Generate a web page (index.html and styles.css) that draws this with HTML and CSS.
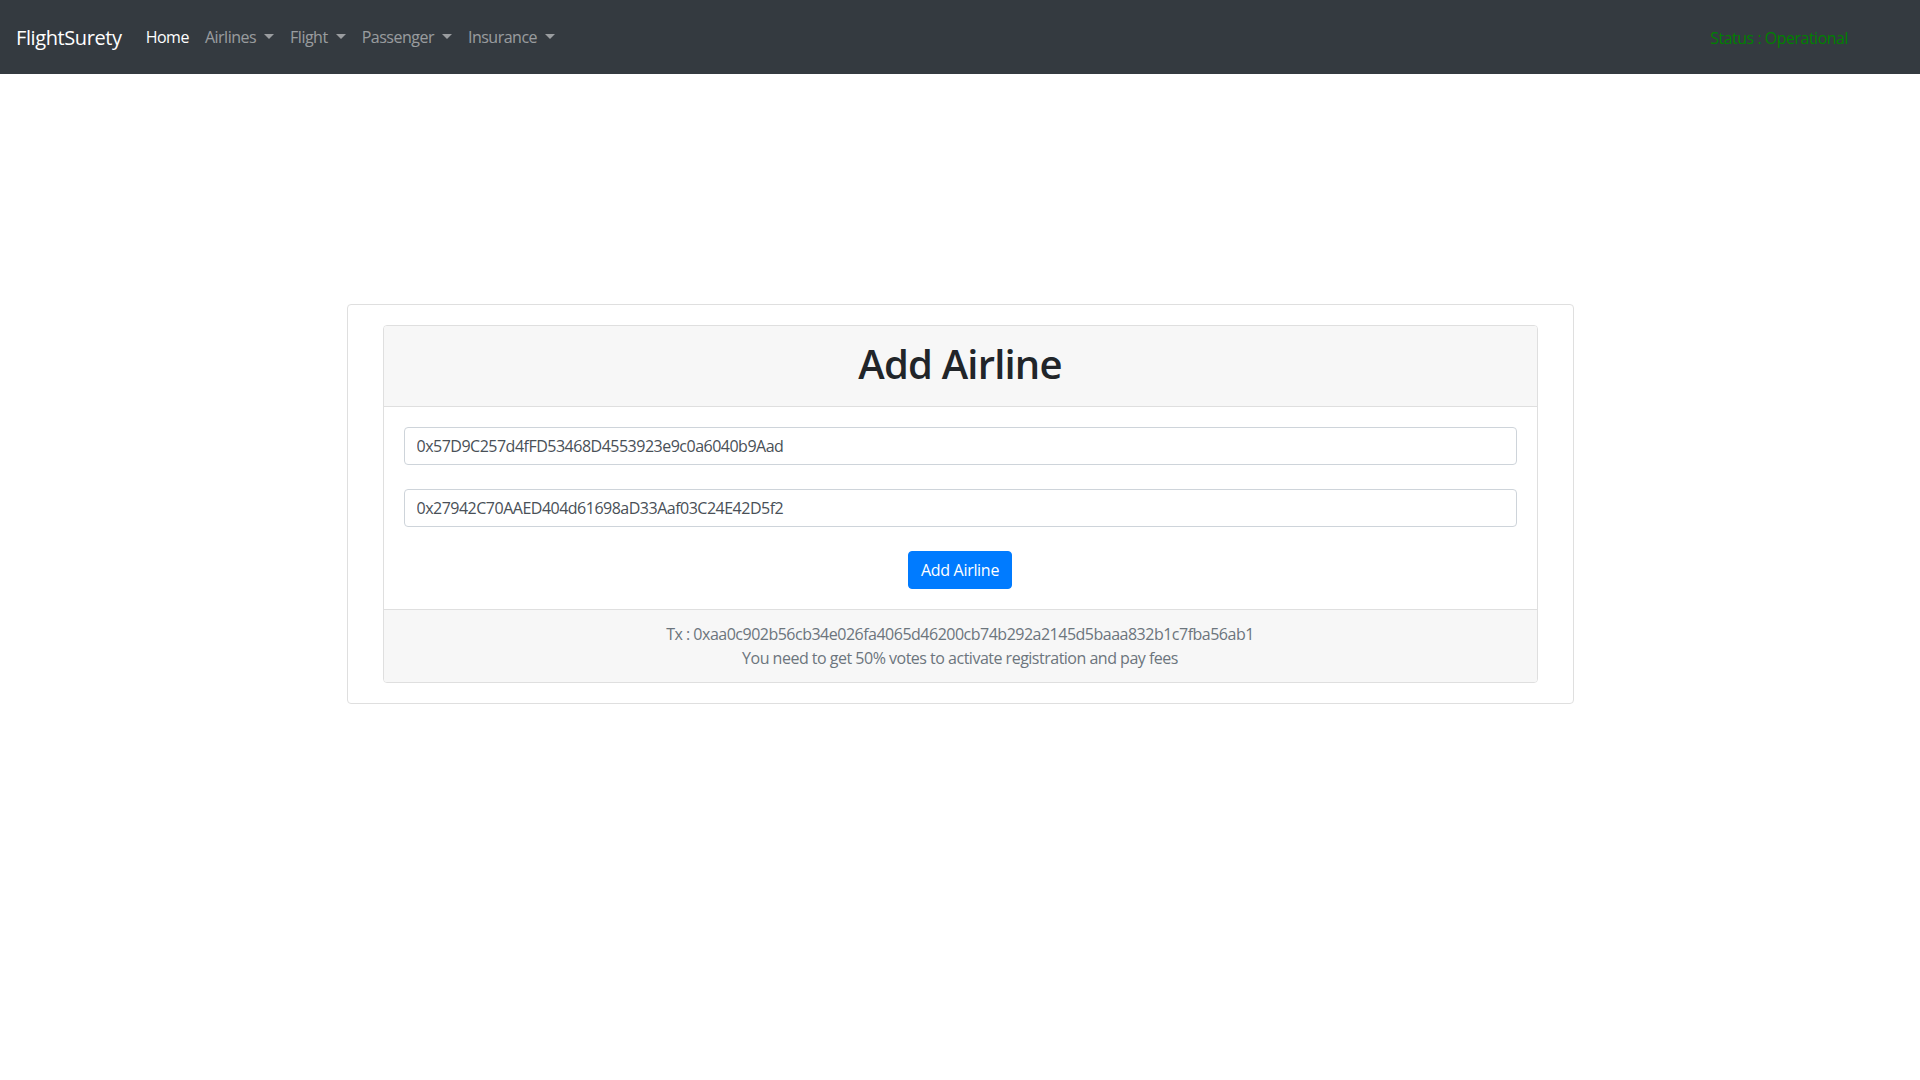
FILE: index.html
```html
<!DOCTYPE html>
<html lang="en">
<head>
<meta charset="utf-8">
<title>FlightSurety</title>
<link rel="stylesheet" href="styles.css">
</head>
<body>
<nav class="navbar">
  <a class="brand" href="#">FlightSurety</a>
  <ul class="nav">
    <li><a class="nav-link active" href="#">Home</a></li>
    <li><a class="nav-link toggle" href="#">Airlines</a></li>
    <li><a class="nav-link toggle" href="#">Flight</a></li>
    <li><a class="nav-link toggle" href="#">Passenger</a></li>
    <li><a class="nav-link toggle" href="#">Insurance</a></li>
  </ul>
  <div class="status">Status : Operational</div>
</nav>
<main class="page">
  <section class="outer-card">
    <div class="inner-card">
      <header class="card-header">
        <h1 class="title">Add Airline</h1>
      </header>
      <div class="card-body">
        <input class="form-input" type="text" value="0x57D9C257d4fFD53468D4553923e9c0a6040b9Aad">
        <input class="form-input" type="text" value="0x27942C70AAED404d61698aD33Aaf03C24E42D5f2">
        <div class="actions">
          <button class="btn" type="button">Add Airline</button>
        </div>
      </div>
      <footer class="card-footer">
        <div>Tx : 0xaa0c902b56cb34e026fa4065d46200cb74b292a2145d5baaa832b1c7fba56ab1</div>
        <div>You need to get 50% votes to activate registration and pay fees</div>
      </footer>
    </div>
  </section>
</main>
</body>
</html>
```
FILE: styles.css
```css
* { box-sizing: border-box; }
html, body { margin: 0; padding: 0; }
body {
  font-family: "Open Sans", "Noto Sans", sans-serif;
  font-size: 16px;
  line-height: 24px;
  letter-spacing: -0.5px;
  color: #212529;
  background: #fff;
}
.navbar {
  height: 74px;
  background: #343a40;
  display: flex;
  align-items: center;
  padding: 0 16px;
}
.brand {
  color: #fff;
  text-decoration: none;
  font-size: 20px;
  line-height: 30px;
  letter-spacing: -0.4px;
  margin-right: 16px;
  padding-top: 2px;
}
.nav {
  list-style: none;
  margin: 0;
  padding: 0;
  display: flex;
}
.nav-link {
  display: block;
  padding: 0 8px;
  color: rgba(255,255,255,.5);
  text-decoration: none;
  font-size: 16px;
  line-height: 24px;
}
.nav-link.active { color: #fff; }
.toggle::after {
  content: "";
  display: inline-block;
  margin-left: 8px;
  vertical-align: 4px;
  border-top: 5px solid;
  border-left: 5px solid transparent;
  border-right: 5px solid transparent;
}
.status {
  margin-left: auto;
  margin-right: 56px;
  color: #008000;
  font-size: 16px;
  padding-top: 2px;
}
.page { padding-top: 230px; }
.outer-card {
  width: 1227px;
  margin: 0 auto;
  border: 1px solid #dfdfdf;
  border-radius: 4px;
  padding: 20px 35px;
}
.inner-card {
  border: 1px solid #dfdfdf;
  border-radius: 4px;
  overflow: hidden;
}
.card-header {
  background: #f7f7f7;
  border-bottom: 1px solid #dfdfdf;
  padding: 14px 20px 12px;
  text-align: center;
}
.title {
  margin: 0 0 6px;
  font-size: 40px;
  line-height: 48px;
  font-weight: 600;
  letter-spacing: -0.8px;
}
.card-body {
  padding: 20px;
  display: flex;
  flex-direction: column;
  gap: 24px;
}
.form-input {
  display: block;
  width: 100%;
  height: 38px;
  padding: 6px 12px;
  font-family: inherit;
  font-size: 16px;
  line-height: 24px;
  letter-spacing: -0.5px;
  color: #495057;
  border: 1px solid #ced4da;
  border-radius: 4px;
  background: #fff;
}
.actions { display: flex; justify-content: center; }
.btn {
  height: 38px;
  padding: 6px 12px;
  font-family: inherit;
  font-size: 16px;
  line-height: 24px;
  letter-spacing: -0.3px;
  color: #fff;
  background: #007bff;
  border: 1px solid #007bff;
  border-radius: 4px;
}
.card-footer {
  background: #f7f7f7;
  border-top: 1px solid #dfdfdf;
  padding: 12px 20px;
  text-align: center;
  color: #6c757d;
}
```
